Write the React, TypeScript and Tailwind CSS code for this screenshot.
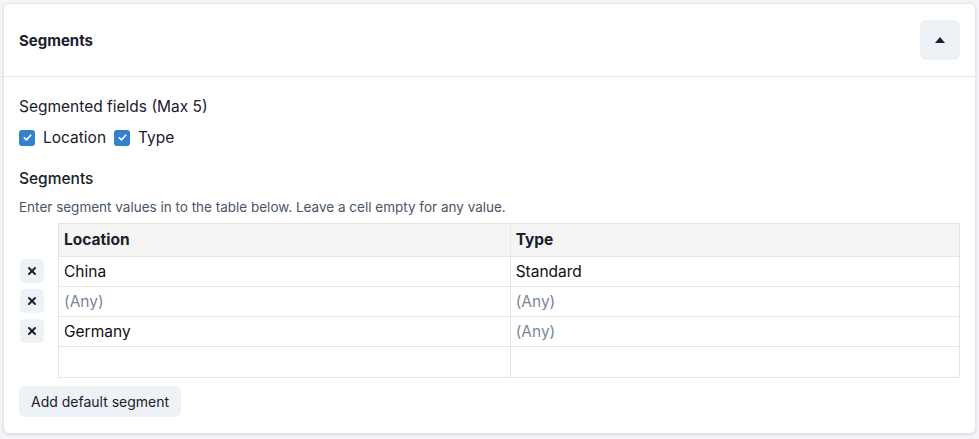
import { X } from "lucide-react";

type Row = { location: string; type: string };

const rows: Row[] = [
  { location: "China", type: "Standard" },
  { location: "", type: "" },
  { location: "Germany", type: "" },
];

function Cell({ value }: { value: string }) {
  return (
    <td className="border border-[#e5e5e5] px-[5px] h-[30px] text-[15.5px]">
      {value ? (
        <span className="text-[#111]">{value}</span>
      ) : (
        <span className="text-[#7a869a]">(Any)</span>
      )}
    </td>
  );
}

function Check({ label }: { label: string }) {
  return (
    <label className="flex items-center gap-[8px]">
      <span className="w-[16px] h-[16px] rounded-[3px] bg-[#3182ce] flex items-center justify-center">
        <svg width="11" height="11" viewBox="0 0 12 12" fill="none">
          <path d="M2.5 6.3l2.3 2.3 4.7-5" stroke="white" strokeWidth="1.8" strokeLinecap="round" strokeLinejoin="round" />
        </svg>
      </span>
      <span>{label}</span>
    </label>
  );
}

export default function App() {
  return (
    <div className="min-h-screen bg-[#f3f5f8] p-[3px] font-['Inter',sans-serif] text-[#1a202c]">
      <div className="bg-white rounded-[6px] border border-[#e4e8ee] shadow-sm">
        <div className="flex items-center justify-between h-[73px] pl-[15px] pr-[15px] border-b border-[#e2e8f0]">
          <h2 className="text-[15px] font-bold mt-[3px]">Segments</h2>
          <button className="w-[40px] h-[40px] rounded-[6px] bg-[#edf2f7] flex items-center justify-center">
            <svg width="10" height="6" viewBox="0 0 10 6">
              <path d="M5 0L10 6H0z" fill="#1a202c" />
            </svg>
          </button>
        </div>
        <div className="px-[15px] pt-[18px] pb-[16px]">
          <div className="text-[15.5px]">Segmented fields (Max 5)</div>
          <div className="flex gap-[8px] mt-[8px] text-[15.5px]">
            <Check label="Location" />
            <Check label="Type" />
          </div>
          <div className="text-[15.5px] font-medium mt-[17px]">Segments</div>
          <div className="text-[13.5px] text-[#4a5568] mt-[7px]">
            Enter segment values in to the table below. Leave a cell empty for any value.
          </div>
          <div className="flex mt-[6px]">
            <div className="w-[39px] shrink-0 pt-[33px] pl-px">
              {rows.map((_, i) => (
                <div key={i} className="h-[30px] flex items-center">
                  <button className="w-[24px] h-[24px] rounded-[5px] bg-[#edf2f7] flex items-center justify-center">
                    <X size={12} strokeWidth={4} color="#1a202c" />
                  </button>
                </div>
              ))}
            </div>
            <table className="flex-1 border-collapse table-fixed">
              <thead>
                <tr className="bg-[#f4f4f4]">
                  <th className="border border-[#e5e5e5] px-[5px] h-[33px] text-left text-[15.5px] font-bold">Location</th>
                  <th className="border border-[#e5e5e5] px-[5px] h-[33px] text-left text-[15.5px] font-bold">Type</th>
                </tr>
              </thead>
              <tbody>
                {rows.map((r, i) => (
                  <tr key={i}>
                    <Cell value={r.location} />
                    <Cell value={r.type} />
                  </tr>
                ))}
                <tr>
                  <td className="border border-[#e5e5e5] h-[31px]" />
                  <td className="border border-[#e5e5e5] h-[31px]" />
                </tr>
              </tbody>
            </table>
          </div>
          <button className="mt-[8px] h-[31px] px-[12px] rounded-[6px] bg-[#edf2f7] text-[14px] text-[#1a202c]">
            Add default segment
          </button>
        </div>
      </div>
    </div>
  );
}
